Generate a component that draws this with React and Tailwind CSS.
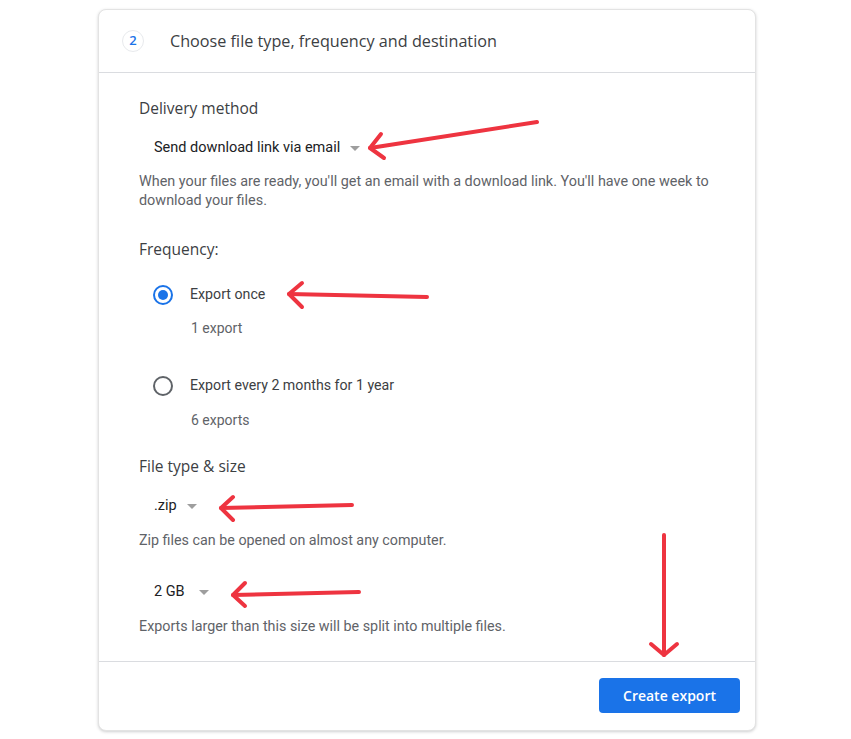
import React from "react";

const body = { fontFamily: "Roboto, 'Liberation Sans', sans-serif" };
const head = { fontFamily: "'Open Sans', Roboto, sans-serif" };

function Caret() {
  return (
    <svg width="10" height="5" viewBox="0 0 10 5" className="ml-[10px]">
      <path d="M0 0 L10 0 L5 5 Z" fill="#9e9e9e" />
    </svg>
  );
}

function Arrow({ x1, y1, x2, y2, w1, w2 }) {
  return (
    <g stroke="#ee3440" strokeWidth="4" strokeLinecap="round" strokeLinejoin="round" fill="none">
      <line x1={x1} y1={y1} x2={x2} y2={y2} />
      <polyline points={`${w1[0]},${w1[1]} ${x2},${y2} ${w2[0]},${w2[1]}`} />
    </g>
  );
}

export default function App() {
  return (
    <div className="relative w-[851px] h-[739px] bg-white overflow-hidden" style={body}>
      <div className="ml-[98px] mt-[9px] w-[658px] rounded-[8px] border border-[#e3e3e3] bg-white shadow-[0_1px_3px_rgba(60,64,67,0.25)]">
        <div className="h-[63px] border-b border-[#dadce0] flex items-center pl-[23px]">
          <div className="w-[22px] h-[22px] rounded-full border border-[#e8eaed] flex items-center justify-center text-[13px] font-semibold text-[#1a73e8]" style={head}>
            2
          </div>
          <div className="ml-[26px] text-[16.2px] text-[#3c4043]" style={head}>
            Choose file type, frequency and destination
          </div>
        </div>

        <div className="pl-[40px] pr-[30px] pt-[25px] pb-[25px]">
          <div className="h-[20px] leading-[20px] text-[15.5px] text-[#3c4043]" style={head}>Delivery method</div>
          <div className="mt-[20px] h-[20px] flex items-center pl-[15px] text-[14.5px] text-[#202124]">
            Send download link via email
            <Caret />
          </div>
          <div className="mt-[14px] text-[14.4px] leading-[19px] text-[#5f6368]">
            When your files are ready, you'll get an email with a download link. You'll have one week to download your files.
          </div>

          <div className="mt-[29px] h-[20px] leading-[20px] text-[15.5px] text-[#3c4043]" style={head}>Frequency:</div>
          <div className="mt-[26px] h-[20px] flex items-center pl-[14px]">
            <div className="w-[20px] h-[20px] rounded-full border-2 border-[#1a73e8] flex items-center justify-center">
              <div className="w-[10px] h-[10px] rounded-full bg-[#1a73e8]" />
            </div>
            <span className="ml-[17px] text-[14.2px] text-[#3c4043]">Export once</span>
          </div>
          <div className="mt-[13px] h-[20px] leading-[20px] pl-[52px] text-[14px] text-[#5f6368]">1 export</div>
          <div className="mt-[38px] h-[20px] flex items-center pl-[14px]">
            <div className="w-[20px] h-[20px] rounded-full border-2 border-[#5f6368]" />
            <span className="ml-[17px] text-[14.2px] text-[#3c4043]">Export every 2 months for 1 year</span>
          </div>
          <div className="mt-[14px] h-[20px] leading-[20px] pl-[52px] text-[14px] text-[#5f6368]">6 exports</div>

          <div className="mt-[26px] h-[20px] leading-[20px] text-[15.5px] text-[#3c4043]" style={head}>File type &amp; size</div>
          <div className="mt-[20px] h-[20px] flex items-center pl-[15px] text-[14.5px] text-[#202124]">
            .zip
            <Caret />
          </div>
          <div className="mt-[14px] h-[20px] leading-[20px] text-[14.3px] text-[#5f6368]">Zip files can be opened on almost any computer.</div>
          <div className="mt-[32px] h-[20px] flex items-center pl-[15px] text-[14.5px] text-[#202124]">
            2 GB
            <span className="ml-[4px] flex"><Caret /></span>
          </div>
          <div className="mt-[14px] h-[20px] leading-[20px] text-[14.3px] text-[#5f6368]">Exports larger than this size will be split into multiple files.</div>
        </div>

        <div className="h-[69px] border-t border-[#dadce0] flex items-center justify-end pr-[15px] pb-[2px]">
          <button className="w-[141px] h-[35px] rounded-[4px] bg-[#1a73e8] text-white text-[14px] font-semibold" style={head}>
            Create export
          </button>
        </div>
      </div>

      <svg className="absolute left-0 top-0 pointer-events-none" width="851" height="739">
        <Arrow x1={537} y1={122} x2={370} y2={148} w1={[381, 134]} w2={[384, 158]} />
        <Arrow x1={427} y1={297} x2={289} y2={294} w1={[302, 283]} w2={[302, 307]} />
        <Arrow x1={352} y1={505} x2={221} y2={508} w1={[233, 497]} w2={[233, 520]} />
        <Arrow x1={359} y1={592} x2={233} y2={595} w1={[245, 583]} w2={[245, 606]} />
        <Arrow x1={664} y1={535} x2={664} y2={655} w1={[651, 644]} w2={[677, 644]} />
      </svg>
    </div>
  );
}
